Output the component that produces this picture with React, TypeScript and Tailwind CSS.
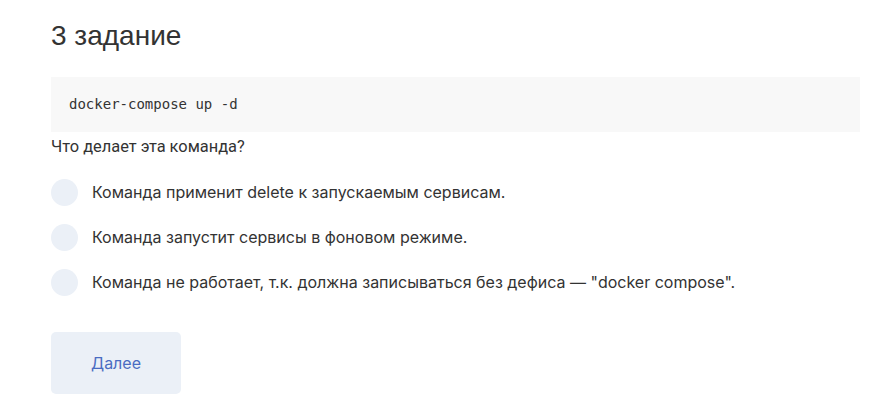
const options = [
  "Команда применит delete к запускаемым сервисам.",
  "Команда запустит сервисы в фоновом режиме.",
  'Команда не работает, т.к. должна записываться без дефиса — "docker compose".',
];

const App = () => {
  return (
    <div className="min-h-screen bg-white pl-[51px] pr-[17px] pt-[18px]">
      <h1 className="text-[28px] leading-[36px] text-[#333] font-['Liberation_Sans',sans-serif]">
        3 задание
      </h1>
      <pre className="mt-[23px] h-[55px] flex items-center bg-[#f8f8f8] px-[18px] font-['DejaVu_Sans_Mono',monospace] text-[14px] text-[#333]">
        docker-compose up -d
      </pre>
      <p className="mt-[3px] text-[16.4px] leading-[24px] text-[#333] font-['Roboto',sans-serif]">
        Что делает эта команда?
      </p>
      <div className="mt-[20px] flex flex-col gap-[18px]">
        {options.map((opt) => (
          <label key={opt} className="flex items-center gap-[14px] cursor-pointer">
            <span className="w-[27px] h-[27px] rounded-full bg-[#ebf0f7] shrink-0" />
            <span className="text-[16px] leading-[27px] text-[#333] font-['Inter',sans-serif]">
              {opt}
            </span>
          </label>
        ))}
      </div>
      <button className="mt-[36px] w-[130px] h-[62px] rounded-[5px] bg-[#ebf0f7] text-[16px] text-[#4a6cc2] font-['Inter',sans-serif]">
        Далее
      </button>
    </div>
  );
};

export default App;
